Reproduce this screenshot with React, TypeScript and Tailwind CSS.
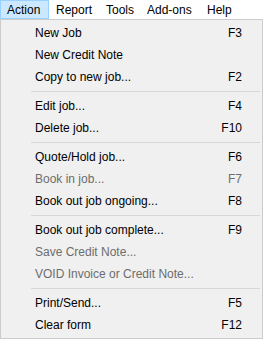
import React from "react";

type Item = { label: string; key?: string; disabled?: boolean } | "sep";

const items: Item[] = [
  { label: "New Job", key: "F3" },
  { label: "New Credit Note" },
  { label: "Copy to new job...", key: "F2" },
  "sep",
  { label: "Edit job...", key: "F4" },
  { label: "Delete job...", key: "F10" },
  "sep",
  { label: "Quote/Hold job...", key: "F6" },
  { label: "Book in job...", key: "F7", disabled: true },
  { label: "Book out job ongoing...", key: "F8" },
  "sep",
  { label: "Book out job complete...", key: "F9" },
  { label: "Save Credit Note...", disabled: true },
  { label: "VOID Invoice or Credit Note...", disabled: true },
  "sep",
  { label: "Print/Send...", key: "F5" },
  { label: "Clear form", key: "F12" },
];

export default function App() {
  return (
    <div className="w-[263px] h-[339px] bg-white font-['Liberation_Sans',Arial,sans-serif] text-[12px] text-black overflow-hidden">
      <div className="flex h-[19px] items-stretch">
        <div className="flex items-center px-[6px] bg-[#cce8ff] border border-[#99d1ff] w-[49px]">
          Action
        </div>
        <div className="flex items-center pl-[7px] w-[50px]">Report</div>
        <div className="flex items-center pl-[7px] w-[41px]">Tools</div>
        <div className="flex items-center pl-[7px] w-[60px]">Add-ons</div>
        <div className="flex items-center pl-[7px]">Help</div>
      </div>
      <div className="w-[263px] border border-[#cccccc] bg-[#f0f0f0] py-[2px]">
        {items.map((it, i) =>
          it === "sep" ? (
            <div key={i} className="h-[7px] pt-[3px] ml-[30px] mr-[2px]">
              <div className="h-px bg-[#d7d7d7]" />
            </div>
          ) : (
            <div
              key={i}
              className={`flex h-[22px] items-center justify-between pl-[34px] pr-[20px] ${
                it.disabled ? "text-[#6d6d6d]" : "text-black"
              }`}
            >
              <span>{it.label}</span>
              {it.key ? <span>{it.key}</span> : null}
            </div>
          )
        )}
      </div>
    </div>
  );
}
